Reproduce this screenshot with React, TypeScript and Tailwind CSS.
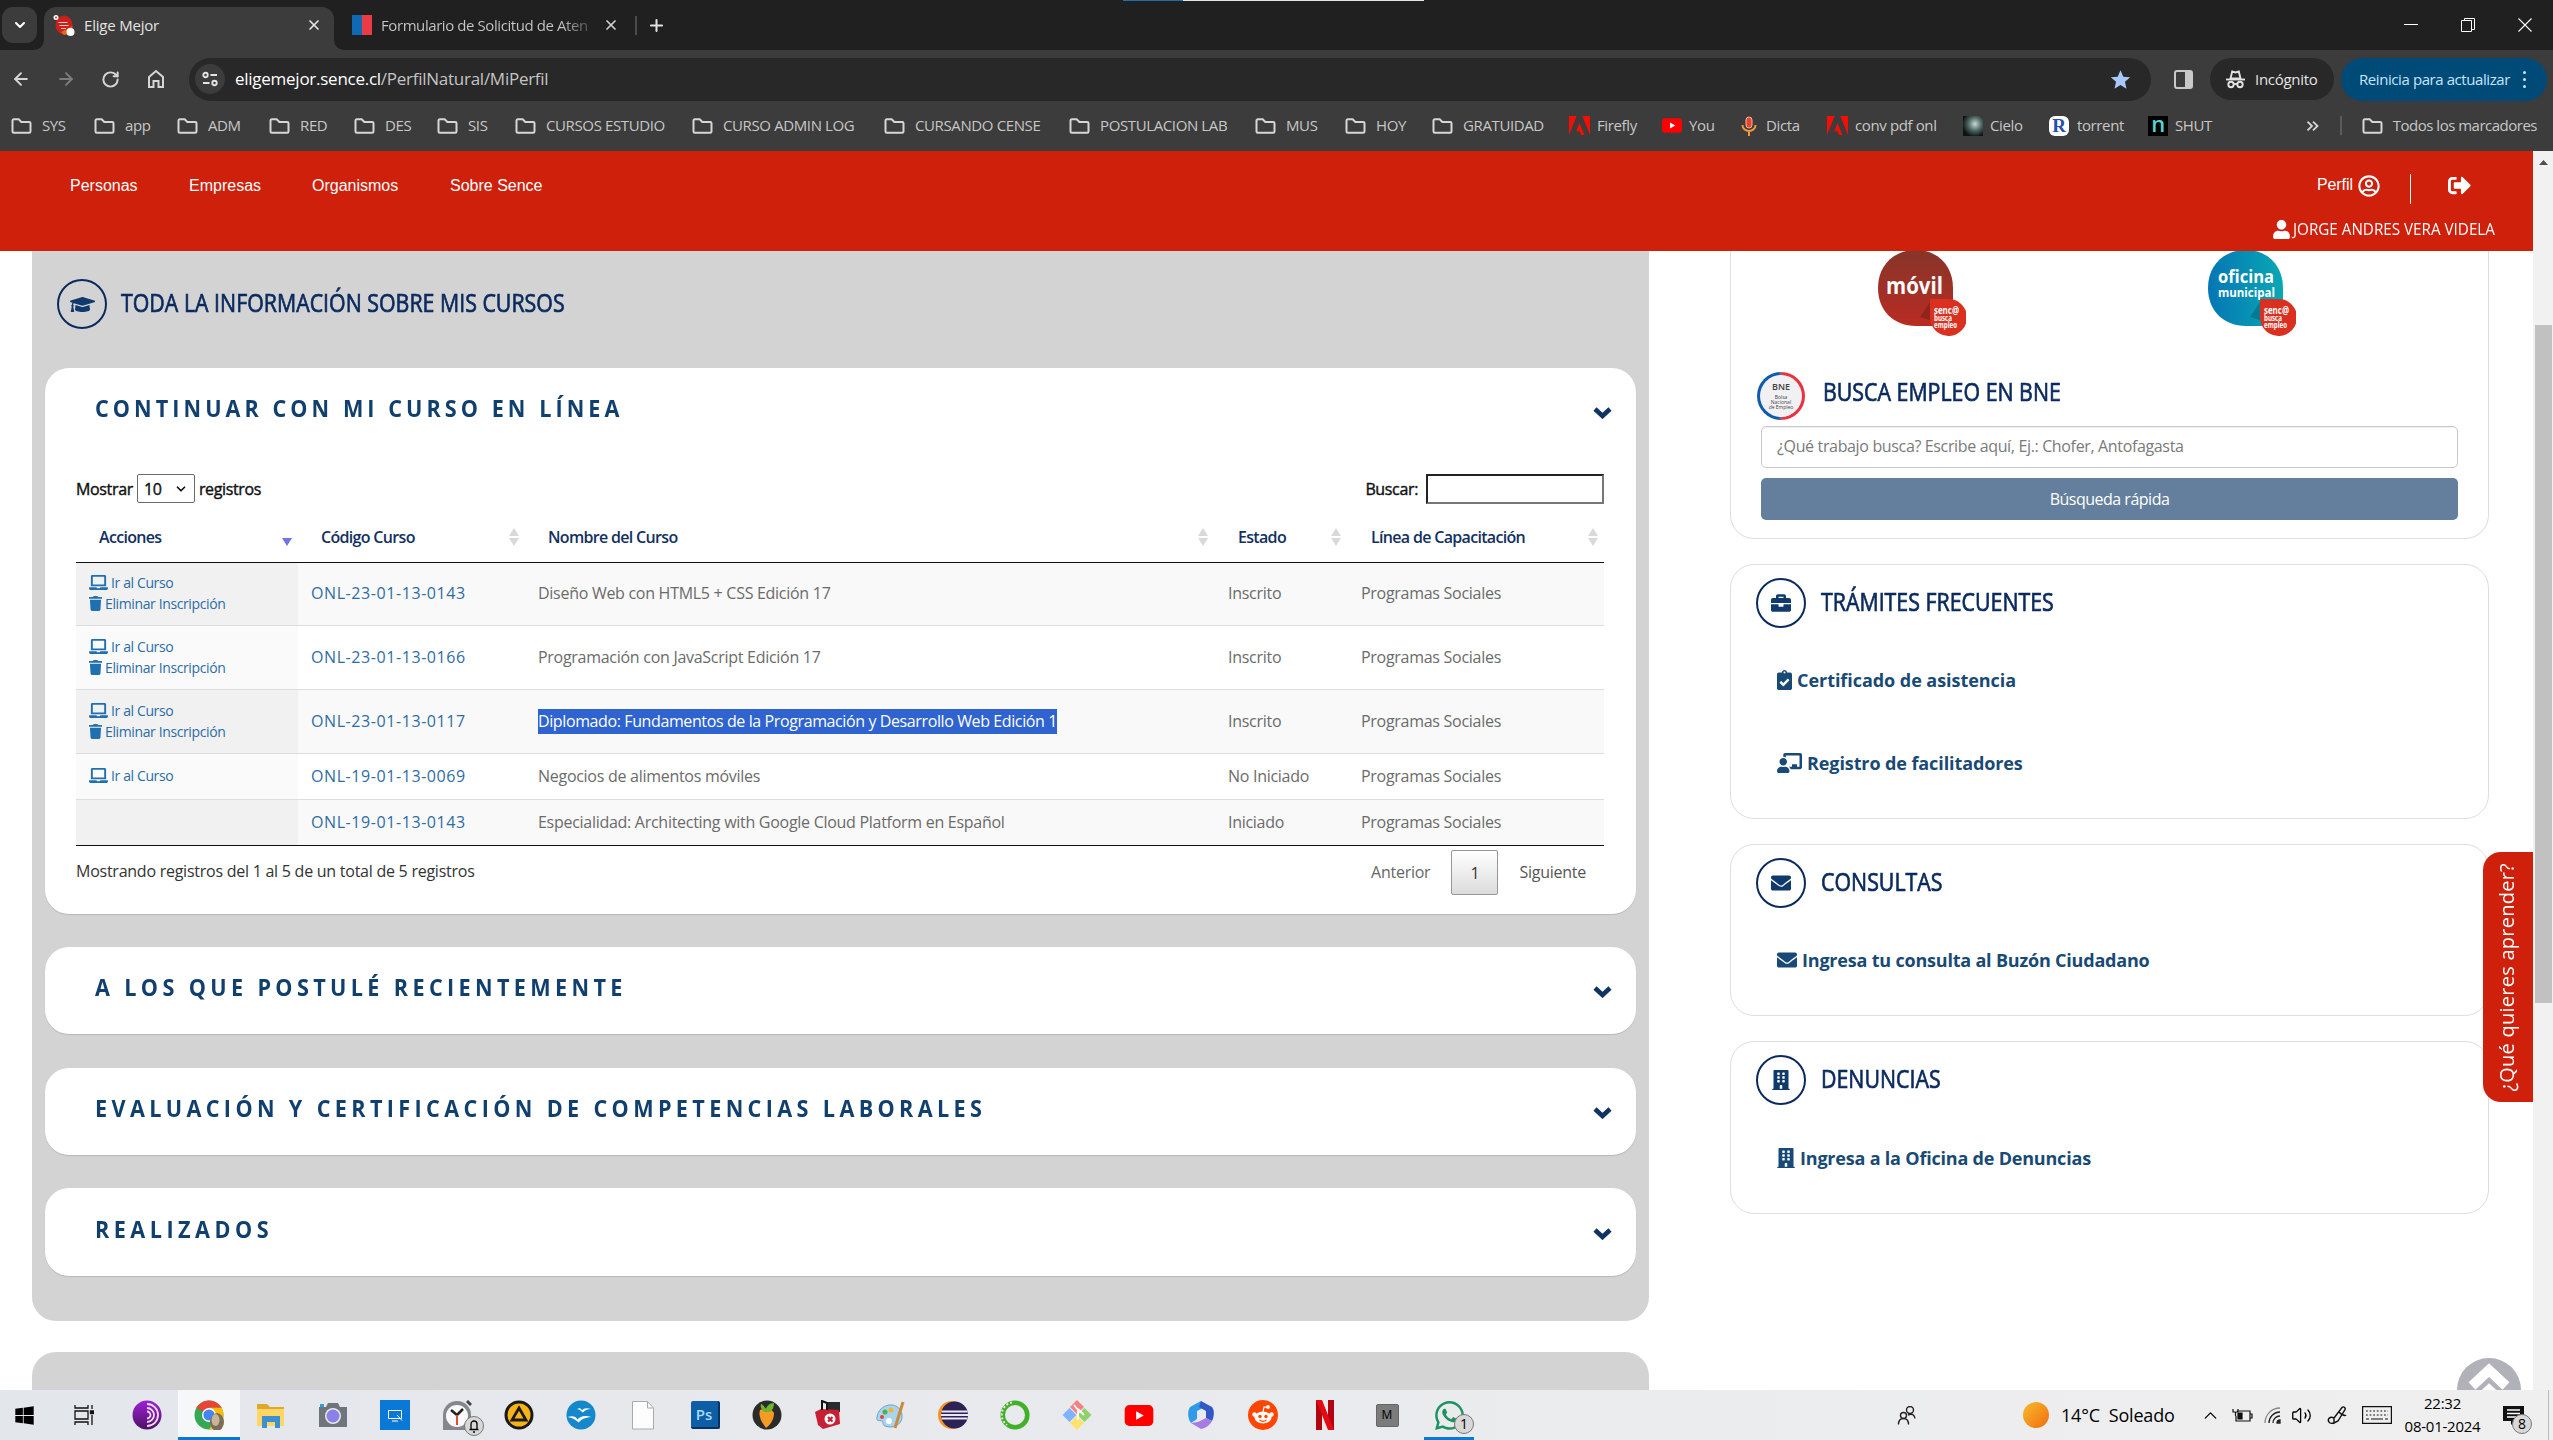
import type { ReactNode } from 'react'
import {
  FaBriefcase, FaBuilding, FaChalkboardTeacher, FaClipboardCheck, FaEnvelope, FaGraduationCap,
  FaLaptop, FaRegUserCircle, FaSignOutAlt, FaTrash, FaUser, FaWhatsapp, FaWindows,
} from 'react-icons/fa'
import { ArrowLeft, ArrowRight, ChevronDown, ChevronUp, Plus, RotateCw, Volume2, X } from 'lucide-react'

/* ---------- browser chrome ---------- */

const Folder = () => (
  <svg className="h-[16px] w-[21px] shrink-0" viewBox="0 0 21 16" fill="none" stroke="#d6d6d6" strokeWidth="2">
    <path d="M1.5 2.6a1.300 1.300 0 0 1 1.300-1.300h4.900l2.600 2.600h7.900a1.300 1.300 0 0 1 1.300 1.300v8.200a1.300 1.300 0 0 1-1.300 1.300H2.800a1.300 1.300 0 0 1-1.300-1.300z" />
  </svg>
)

const Adobe = () => (
  <svg className="h-[19px] w-[21px] shrink-0" viewBox="0 0 21 19" fill="#f40f02">
    <path d="M0 0h7.700L0 19zM13.300 0H21v19zM10.500 7l5 12h-3.300l-1.500-3.800H7.200z" />
  </svg>
)

const YouTube = ({ className }: { className: string }) => (
  <svg className={className} viewBox="0 0 30 22">
    <rect width="30" height="22" rx="5" fill="#f00" />
    <path d="M12 6.500v9l8-4.500z" fill="#fff" />
  </svg>
)

function Tabs() {
  return (
    <div className="flex h-[50px] items-start bg-[#202020]">
      <div className="mt-[7px] ml-[2px] flex h-[36px] w-[35px] items-center justify-center rounded-[11px] bg-[#3c3c3c]">
        <ChevronDown className="size-[16px] text-white" strokeWidth={3} />
      </div>
      <div className="ml-[-3px] h-[10px] w-[10px] self-end bg-[#3c3c3c]">
        <div className="h-full w-full rounded-br-[10px] bg-[#202020]" />
      </div>
      <div className="mt-[7px] flex h-[43px] w-[290px] items-center rounded-t-[12px] bg-[#3c3c3c] pb-[7px] pl-[9px]">
        <svg className="h-[21px] w-[22px]" viewBox="0 0 22 21">
          <ellipse cx="11" cy="10" rx="8.500" ry="9.500" fill="#c8201a" />
          <path d="M11 20c5 0 8.500-4 8.500-9L8 17z" fill="#f0641e" />
          <path d="M5.500 7.500h9M6.500 10.500h9M8 13.500h5" stroke="#f9c9c2" strokeWidth="1.200" />
          <circle cx="3" cy="2.500" r="2.500" fill="#fff" />
          <circle cx="3" cy="2.500" r="1" fill="#d42a1d" />
          <circle cx="17.500" cy="17" r="4" fill="#fff" />
        </svg>
        <span className="ml-[9px] text-[15px] tracking-[-0.2px] text-[#e3e3e3]">Elige Mejor</span>
        <X className="mr-[12px] ml-auto size-[16px] text-[#e3e3e3]" strokeWidth={2.600} />
      </div>
      <div className="h-[10px] w-[10px] self-end bg-[#3c3c3c]">
        <div className="h-full w-full rounded-bl-[10px] bg-[#202020]" />
      </div>
      <div className="mt-[7px] ml-[8px] flex h-[36px] items-center">
        <div className="flex h-[20px] w-[20px]">
          <div className="w-1/2 bg-[#0f69b4]" />
          <div className="w-1/2 bg-[#eb3c46]" />
        </div>
        <span className="ml-[9px] w-[212px] bg-linear-to-r from-[#c8c8c8] from-85% to-[#404040] bg-clip-text text-[15px] tracking-[-0.42px] whitespace-nowrap text-transparent">Formulario de Solicitud de Aten</span>
        <X className="ml-[10px] size-[16px] text-[#d0d0d0]" strokeWidth={2.600} />
        <div className="ml-[16px] h-[19px] w-[2px] bg-[#4a4a4a]" />
        <Plus className="ml-[10px] size-[19px] text-[#e3e3e3]" strokeWidth={2.600} />
      </div>
      <div className="ml-[457px] flex h-[2px]">
        <div className="h-[1px] w-[60px] bg-[#1f6fae]" />
        <div className="h-[1px] w-[241px] bg-[#dfe5e3]" />
      </div>
      <div className="mr-[21px] ml-auto flex h-[49px] items-center gap-[43px] text-white">
        <div className="h-px w-[14px] bg-white" />
        <svg className="size-[14px]" viewBox="0 0 14 14" fill="none" stroke="currentColor" strokeWidth="1">
          <path d="M.5 2.500h10v11H.500zM3.500 2.500v-2h10v11h-3" />
        </svg>
        <svg className="size-[14px]" viewBox="0 0 14 14" stroke="currentColor" strokeWidth="1.100">
          <path d="M.5.5l13 13M13.500.5l-13 13" />
        </svg>
      </div>
    </div>
  )
}

function Toolbar() {
  return (
    <div className="flex h-[58px] items-center pl-[11px] text-[#d6d6d6]">
      <ArrowLeft className="size-[20px]" strokeWidth={2.300} />
      <ArrowRight className="ml-[25px] size-[20px] text-[#7d7d7d]" strokeWidth={2.300} />
      <RotateCw className="ml-[25px] size-[19px]" strokeWidth={2.500} />
      <svg className="ml-[26px] size-[20px]" viewBox="0 0 20 20" fill="none" stroke="currentColor" strokeWidth="2">
        <path d="M3 8l7-6 7 6v10h-4.500v-6h-5v6H3z" />
      </svg>
      <div className="ml-[23px] flex h-[43px] w-[1962px] items-center rounded-[22px] bg-[#282828] pl-[6px]">
        <div className="flex size-[30px] items-center justify-center rounded-full bg-[#3c3c3c]">
          <svg className="size-[16px]" viewBox="0 0 16 16" fill="none" stroke="#e3e3e3" strokeWidth="1.900">
            <circle cx="3.500" cy="4" r="2.200" />
            <path d="M8.500 4H15M1 12h6.500" />
            <circle cx="12.500" cy="12" r="2.200" />
          </svg>
        </div>
        <span className="ml-[10px] text-[17px] tracking-[-0.26px] text-[#c4c4c4]">
          <span className="text-white">eligemejor.sence.cl</span>/PerfilNatural/MiPerfil
        </span>
        <svg className="mr-[20px] ml-auto size-[21px]" viewBox="0 0 24 24" fill="#a8c7fa">
          <path d="M12 1.500l3.200 7.300 7.900.7-6 5.200 1.800 7.800L12 18.400l-6.900 4.100 1.800-7.800-6-5.200 7.900-.7z" />
        </svg>
      </div>
      <div className="ml-[23px] flex h-[19px] w-[19px] justify-end rounded-[3px] border-2 border-[#c9c9c9]">
        <div className="w-[6px] bg-[#c9c9c9]" />
      </div>
      <div className="ml-[17px] flex h-[42px] w-[124px] items-center rounded-[21px] bg-[#282828] pl-[16px]">
        <svg className="h-[19px] w-[19px]" viewBox="0 0 19 19" fill="none" stroke="#e3e3e3" strokeWidth="1.900">
          <path d="M4.500 8.500l1.700-7 3.300 1 3.300-1 1.700 7z" />
          <path d="M0 9.500h19" />
          <circle cx="5" cy="14.500" r="2.700" />
          <circle cx="14" cy="14.500" r="2.700" />
          <path d="M7.500 14h4" />
        </svg>
        <span className="ml-[10px] text-[15px] tracking-[-0.3px] text-[#e3e3e3]">Incógnito</span>
      </div>
      <div className="ml-[7px] flex h-[43px] w-[206px] items-center rounded-[22px] bg-[#004a77] pl-[18px]">
        <span className="w-[152px] text-[15px] tracking-[-0.42px] whitespace-nowrap text-[#c2e7ff]">Reinicia para actualizar</span>
        <div className="ml-[12px] flex flex-col gap-[4px]">
          <div className="size-[3px] rounded-full bg-[#c2e7ff]" />
          <div className="size-[3px] rounded-full bg-[#c2e7ff]" />
          <div className="size-[3px] rounded-full bg-[#c2e7ff]" />
        </div>
      </div>
    </div>
  )
}

const Bookmark = ({ w, icon, gap = 'gap-[10px]', children }: { w: string; icon?: ReactNode; gap?: string; children: ReactNode }) => (
  <div className={`flex shrink-0 items-center whitespace-nowrap ${w} ${gap}`}>
    {icon ?? <Folder />}
    <span>{children}</span>
  </div>
)

function Bookmarks() {
  return (
    <div className="flex h-[43px] items-center pb-[8px] pl-[11px] text-[15px] tracking-[-0.38px] text-[#c7c7c7]">
      <Bookmark w="w-[83px]">SYS</Bookmark>
      <Bookmark w="w-[83px]">app</Bookmark>
      <Bookmark w="w-[92px]">ADM</Bookmark>
      <Bookmark w="w-[85px]">RED</Bookmark>
      <Bookmark w="w-[83px]">DES</Bookmark>
      <Bookmark w="w-[78px]">SIS</Bookmark>
      <Bookmark w="w-[177px]">CURSOS ESTUDIO</Bookmark>
      <Bookmark w="w-[192px]">CURSO ADMIN LOG</Bookmark>
      <Bookmark w="w-[185px]">CURSANDO CENSE</Bookmark>
      <Bookmark w="w-[186px]">POSTULACION LAB</Bookmark>
      <Bookmark w="w-[90px]">MUS</Bookmark>
      <Bookmark w="w-[87px]">HOY</Bookmark>
      <Bookmark w="w-[137px]">GRATUIDAD</Bookmark>
      <Bookmark w="w-[93px]" gap="gap-[7px]" icon={<Adobe />}>Firefly</Bookmark>
      <Bookmark w="w-[78px]" gap="gap-[7px]" icon={<YouTube className="h-[15px] w-[20px]" />}>You</Bookmark>
      <Bookmark w="w-[87px]" gap="gap-[8px]" icon={
        <svg className="h-[20px] w-[18px]" viewBox="0 0 18 20" fill="none">
          <rect x="6" y="1" width="6" height="11" rx="3" fill="#e8452c" stroke="#f6b8a0" />
          <path d="M2.500 9a6.500 6 0 0 0 13 0M9 15v5" stroke="#f29a38" strokeWidth="2" />
        </svg>}>Dicta</Bookmark>
      <Bookmark w="w-[136px]" gap="gap-[7px]" icon={<Adobe />}>conv pdf onl</Bookmark>
      <Bookmark w="w-[86px]" gap="gap-[7px]" icon={<div className="size-[20px] bg-[radial-gradient(ellipse_at_60%_40%,#c9d8d2,#4d6663_40%,#0c1413_75%)]" />}>Cielo</Bookmark>
      <Bookmark w="w-[99px]" gap="gap-[8px]" icon={<div className="flex size-[20px] items-center justify-center rounded-[6px] bg-white font-['Liberation_Serif'] text-[19px] leading-none font-bold text-[#2350a8]">R</div>}>torrent</Bookmark>
      <Bookmark w="w-[66px]" gap="gap-[7px]" icon={<div className="flex h-[20px] w-[20px] items-center justify-center bg-black pb-[5px] text-[22px] leading-none font-semibold text-[#55d6d0]">n</div>}>SHUT</Bookmark>
      <svg className="mr-[21px] ml-auto h-[10px] w-[13px]" viewBox="0 0 13 10" fill="none" stroke="#d6d6d6" strokeWidth="1.800">
        <path d="M1.500.7L6 5 1.500 9.300M7 .7L11.500 5 7 9.300" />
      </svg>
      <div className="h-[19px] w-[2px] bg-[#5b5b5b]" />
      <div className="mr-[16px] ml-[20px] flex items-center gap-[10px] tracking-[-0.5px]">
        <Folder />
        <span>Todos los marcadores</span>
      </div>
    </div>
  )
}

/* ---------- page ---------- */

function SiteHeader() {
  return (
    <header className="flex h-[100px] bg-[#ce200b] font-['Liberation_Sans'] text-[16px] leading-[20px] text-white">
      <nav className="flex pt-[25px] pl-[70px]">
        <span className="w-[119px]">Personas</span>
        <span className="w-[123px]">Empresas</span>
        <span className="w-[138px]">Organismos</span>
        <span>Sobre Sence</span>
      </nav>
      <div className="mt-[23px] ml-auto w-[260px]">
        <div className="flex h-[30px] items-center pl-[44px]">
          <span className="mb-[8px] w-[41px] tracking-[-0.1px]">Perfil</span>
          <FaRegUserCircle className="mb-[6px] size-[22px]" />
          <div className="ml-[30px] h-[30px] w-px bg-white" />
          <FaSignOutAlt className="mb-[7px] ml-[37px] size-[23px]" />
        </div>
        <div className="mt-[15px] flex h-[20px] items-center gap-[3px] font-['Open_Sans'] text-[17px]">
          <FaUser className="h-[19px] w-[17px]" />
          <span className="origin-left scale-x-[0.895] whitespace-nowrap">JORGE ANDRES VERA VIDELA</span>
        </div>
      </div>
    </header>
  )
}

const Round = ({ children }: { children: ReactNode }) => (
  <div className="flex size-[50px] shrink-0 items-center justify-center rounded-full border-2 border-[#0a2a5e] text-[#0f3a6b]">{children}</div>
)

const SectionTitle = ({ children }: { children: ReactNode }) => (
  <h2 className="mt-[-2px] origin-left scale-x-[0.854] text-[25px] font-medium whitespace-nowrap text-[#0a2a5e] [-webkit-text-stroke:0.7px_#0a2a5e]">{children}</h2>
)

const CardHead = ({ children, tracking = 'tracking-[4.86px]' }: { children: ReactNode; tracking?: string }) => (
  <div className="flex h-[80px] items-center justify-between pr-[24px] pl-[50px]">
    <h3 className={`origin-left scale-x-[0.9] text-[24px] font-bold whitespace-nowrap text-[#11406e] ${tracking}`}>{children}</h3>
    <svg className="mt-[10px] h-[12px] w-[19px] shrink-0" viewBox="0 0 19 12" fill="none" stroke="#0f3363" strokeWidth="4.600">
      <path d="M2 2l7.500 7L17 2" />
    </svg>
  </div>
)

const Sort = ({ active = false }: { active?: boolean }) => (
  <svg className="h-[18px] w-[10px]" viewBox="0 0 10 18">
    {!active && <path d="M5 0l5 8H0z" fill="#d9d9d9" />}
    <path d="M5 18l5-8H0z" fill={active ? '#7076de' : '#d9d9d9'} />
  </svg>
)

const Th = ({ children, active, pr = 'pr-[6px]' }: { children: ReactNode; active?: boolean; pr?: string }) => (
  <div className={`flex items-center justify-between pt-[8px] pl-[23px] ${pr}`}>
    <span className="whitespace-nowrap">{children}</span>
    <Sort active={active} />
  </div>
)

const rows = [
  { h: 'h-[62px]', code: 'ONL-23-01-13-0143', name: 'Diseño Web con HTML5 + CSS Edición 17', state: 'Inscrito', go: true, del: true },
  { h: 'h-[64px]', code: 'ONL-23-01-13-0166', name: 'Programación con JavaScript Edición 17', state: 'Inscrito', go: true, del: true },
  { h: 'h-[64px]', code: 'ONL-23-01-13-0117', name: 'Diplomado: Fundamentos de la Programación y Desarrollo Web Edición 1', state: 'Inscrito', go: true, del: true, selected: true },
  { h: 'h-[46px]', code: 'ONL-19-01-13-0069', name: 'Negocios de alimentos móviles', state: 'No Iniciado', go: true, del: false },
  { h: 'h-[46px]', code: 'ONL-19-01-13-0143', name: 'Especialidad: Architecting with Google Cloud Platform en Español', state: 'Iniciado', go: false, del: false },
]

function CourseTable() {
  return (
    <div>
      <div className="grid h-[59px] grid-cols-[222px_227px_690px_133px_256px] text-[16px] font-semibold tracking-[-0.68px] text-[#12305f]">
        <Th active>Acciones</Th>
        <Th>Código Curso</Th>
        <Th pr="pr-[7px]">Nombre del Curso</Th>
        <Th pr="pr-[7px]">Estado</Th>
        <Th>Línea de Capacitación</Th>
      </div>
      <div className="border-y border-[#111]">
        {rows.map((r, i) => (
          <div key={r.code} className={`grid grid-cols-[222px_227px_690px_133px_256px] items-stretch text-[16px] tracking-[-0.28px] text-[#6b6b6b] ${r.h} ${i > 0 ? 'border-t border-[#ddd]' : ''} ${i % 2 === 0 ? 'bg-[#f9f9f9]' : 'bg-white'}`}>
            <div className={`flex flex-col justify-center pb-[2px] pl-[13px] text-[14px] leading-[21px] tracking-[-0.38px] text-[#2a6da8] ${i % 2 === 0 ? 'bg-[#f1f1f1]' : 'bg-[#fafafa]'}`}>
              {r.go && <div className="flex items-center gap-[3px]"><FaLaptop className="size-[19px] text-[#1f70b0]" />Ir al Curso</div>}
              {r.del && <div className="flex items-center gap-[3px]"><FaTrash className="h-[15px] w-[13px] text-[#1f70b0]" />Eliminar Inscripción</div>}
            </div>
            <div className="flex items-center pb-[2px] pl-[13px] tracking-[0.58px] text-[#2e6da4]">{r.code}</div>
            <div className="flex items-center pb-[2px] pl-[13px] whitespace-nowrap">
              <span className={r.selected ? 'mt-[2px] bg-[#2f63d0] leading-[25px] tracking-[-0.39px] text-white' : ''}>{r.name}</span>
            </div>
            <div className="flex items-center pb-[2px] pl-[13px]">{r.state}</div>
            <div className="flex items-center pb-[2px] pl-[13px]">Programas Sociales</div>
          </div>
        ))}
      </div>
    </div>
  )
}

function Courses() {
  return (
    <main className="ml-[32px] w-[1617px] shrink-0">
      <section className="h-[1070px] rounded-b-[24px] bg-[#d3d3d3] pt-[28px] pr-[13px] pl-[13px]">
        <div className="flex items-center gap-[14px] pl-[12px]">
          <Round><FaGraduationCap className="size-[25px]" /></Round>
          <SectionTitle>TODA LA INFORMACIÓN SOBRE MIS CURSOS</SectionTitle>
        </div>
        <div className="mt-[39px] h-[546px] rounded-[24px] bg-white shadow-[0_1px_1px_#0002]">
          <CardHead tracking="tracking-[4.52px]">CONTINUAR CON MI CURSO EN LÍNEA</CardHead>
          <div className="pt-[26px] pr-[32px] pl-[31px]">
            <div className="flex h-[29px] items-center text-[16px] tracking-[-0.35px] text-[#111] [-webkit-text-stroke:0.4px_#111]">
              <span>Mostrar</span>
              <div className="mx-[4px] flex h-[29px] w-[58px] items-center justify-between rounded-[2px] border border-[#6b6b6b] px-[6px]">
                <span>10</span>
                <ChevronDown className="size-[14px]" strokeWidth={3} />
              </div>
              <span>registros</span>
              <span className="mr-[8px] ml-auto">Buscar:</span>
              <div className="h-[30px] w-[178px] border-2 border-t-[#222] border-r-[#767676] border-b-[#767676] border-l-[#222]" />
            </div>
            <CourseTable />
            <div className="mt-[4px] flex h-[45px] items-center text-[16px] tracking-[-0.25px] text-[#333]">
              <span className="pb-[3px]">Mostrando registros del 1 al 5 de un total de 5 registros</span>
              <span className="ml-auto pb-[2px] text-[#666]">Anterior</span>
              <div className="mx-[21px] flex h-[45px] w-[47px] items-center justify-center rounded-[2px] border border-[#979797] bg-linear-to-b from-white to-[#dcdcdc]">1</div>
              <span className="mr-[18px] pb-[2px] text-[#555]">Siguiente</span>
            </div>
          </div>
        </div>
        <div className="mt-[33px] h-[87px] rounded-[24px] bg-white shadow-[0_1px_1px_#0002]"><CardHead>A LOS QUE POSTULÉ RECIENTEMENTE</CardHead></div>
        <div className="mt-[34px] h-[87px] rounded-[24px] bg-white shadow-[0_1px_1px_#0002]"><CardHead>EVALUACIÓN Y CERTIFICACIÓN DE COMPETENCIAS LABORALES</CardHead></div>
        <div className="mt-[33px] h-[88px] rounded-[24px] bg-white pt-px shadow-[0_1px_1px_#0002]"><CardHead tracking="tracking-[5px]">REALIZADOS</CardHead></div>
      </section>
      <section className="mt-[31px] h-[60px] rounded-t-[24px] bg-[#d3d3d3]" />
    </main>
  )
}

const OfficeLogo = ({ id, from, to, top, bottom }: { id: string; from: string; to: string; top: string; bottom?: string }) => (
  <svg className="h-[88px] w-[88px]" viewBox="0 0 88 88" fontFamily="Open Sans" fontWeight="700" fill="#fff">
    <defs>
      <linearGradient id={id} x1="0" y1="0" x2={bottom ? '1' : '0'} y2={bottom ? '0' : '1'}>
        <stop offset="0" stopColor={from} />
        <stop offset="1" stopColor={to} />
      </linearGradient>
    </defs>
    <path d="M38-1C60-1 75 15 75 37v14L54 75H38C16 75 0 60 0 37S16-1 38-1z" fill={`url(#${id})`} />
    <path d="M42 66l12-18v22z" fill="#000" opacity=".18" />
    <path d="M52 48h17a18.500 18.500 0 1 1-17 19z" fill="#d9301f" />
    {bottom ? (
      <>
        <text x="10" y="32" fontSize="18" textLength="56" lengthAdjust="spacingAndGlyphs">{top}</text>
        <text x="10" y="45.500" fontSize="13" textLength="57" lengthAdjust="spacingAndGlyphs">{bottom}</text>
      </>
    ) : (
      <text x="8" y="43" fontSize="23" textLength="57" lengthAdjust="spacingAndGlyphs">{top}</text>
    )}
    <g fontSize="10">
      <text x="56" y="63" textLength="25" lengthAdjust="spacingAndGlyphs">senc@</text>
      <text x="56" y="70" fontSize="8" textLength="18" lengthAdjust="spacingAndGlyphs">busca</text>
      <text x="56" y="77" fontSize="8" textLength="23" lengthAdjust="spacingAndGlyphs">empleo</text>
    </g>
  </svg>
)

const SideCard = ({ h, icon, title, children }: { h: string; icon: ReactNode; title: string; children: ReactNode }) => (
  <section className={`rounded-[24px] border border-[#dedede] pt-[13px] pl-[25px] ${h}`}>
    <div className="flex items-center gap-[15px]">
      <Round>{icon}</Round>
      <SectionTitle>{title}</SectionTitle>
    </div>
    <div className="mt-[40px] flex flex-col gap-[59px] pl-[21px] text-[18px] leading-[24px] font-bold tracking-[-0.16px] text-[#184a75]">{children}</div>
  </section>
)

function Sidebar() {
  return (
    <aside className="ml-[81px] flex w-[759px] flex-col">
      <section className="h-[288px] rounded-b-[24px] border border-t-0 border-[#dedede] pl-[25px]">
        <div className="flex h-[121px] gap-[242px] pl-[122px]">
          <OfficeLogo id="movil" from="#86352a" to="#b92b22" top="móvil" />
          <OfficeLogo id="oficina" from="#0576b4" to="#08a8b4" top="oficina" bottom="municipal" />
        </div>
        <div className="flex gap-[18px] pl-px">
          <div className="rounded-full bg-linear-to-r from-[#0f5cae] from-45% to-[#e8323e] to-55% p-[3px]">
            <div className="flex size-[42px] flex-col items-center justify-center rounded-full bg-[#f1f1f3] text-[9px] leading-[10px] font-semibold text-[#444]">
              BNE
              <span className="mt-[3px] text-center text-[5px] leading-[5px] font-normal">Bolsa<br />Nacional<br />de Empleo</span>
            </div>
          </div>
          <div className="flex h-[42px] items-center"><SectionTitle>BUSCA EMPLEO EN BNE</SectionTitle></div>
        </div>
        <div className="mt-[6px] ml-[5px] flex h-[42px] w-[697px] items-center rounded-[5px] border border-[#c8c8c8] pb-[2px] pl-[15px] text-[16px] tracking-[-0.35px] text-[#7a7a7a] shadow-[inset_0_1px_1px_#0001]">¿Qué trabajo busca? Escribe aquí, Ej.: Chofer, Antofagasta</div>
        <div className="mt-[10px] ml-[5px] flex h-[42px] w-[697px] items-center justify-center rounded-[5px] bg-[#647f9d] text-[16px] tracking-[-0.5px] text-white">Búsqueda rápida</div>
      </section>
      <div className="h-[25px]" />
      <SideCard h="h-[255px]" icon={<FaBriefcase className="size-[20px]" />} title="TRÁMITES FRECUENTES">
        <div className="flex items-center gap-[5px] tracking-[-0.05px]"><FaClipboardCheck className="h-[20px] w-[15px]" />Certificado de asistencia</div>
        <div className="flex items-center gap-[5px] tracking-[-0.1px]"><FaChalkboardTeacher className="h-[20px] w-[25px]" />Registro de facilitadores</div>
      </SideCard>
      <div className="h-[25px]" />
      <SideCard h="h-[172px]" icon={<FaEnvelope className="size-[20px]" />} title="CONSULTAS">
        <div className="flex items-center gap-[5px] tracking-[-0.2px]"><FaEnvelope className="size-[20px]" />Ingresa tu consulta al Buzón Ciudadano</div>
      </SideCard>
      <div className="h-[25px]" />
      <SideCard h="h-[173px]" icon={<FaBuilding className="size-[20px]" />} title="DENUNCIAS">
        <div className="flex items-center gap-[5px] pt-[1px] tracking-[-0.2px]"><FaBuilding className="h-[20px] w-[18px]" />Ingresa a la Oficina de Denuncias</div>
      </SideCard>
    </aside>
  )
}

/* ---------- taskbar ---------- */

const Svg = ({ children }: { children: ReactNode }) => (
  <svg className="size-[30px]" viewBox="0 0 30 30" fill="none">{children}</svg>
)

const Badge = ({ children, className }: { children: ReactNode; className: string }) => (
  <div className={`absolute flex size-[20px] items-center justify-center rounded-full border border-[#777] bg-[#d8d8d8] text-[14px] leading-none text-black ${className}`}>{children}</div>
)

const apps: { key: string; cell?: string; icon: ReactNode; extra?: ReactNode }[] = [
  { key: 'tor', icon: <Svg><defs><linearGradient id="tor" x1="0" y1="0" x2="0" y2="1"><stop stopColor="#a020d8" /><stop offset="1" stopColor="#4b1263" /></linearGradient></defs><circle cx="15" cy="15" r="14.500" fill="url(#tor)" /><path d="M15 4a11 11 0 0 1 0 22M15 8a7 7 0 0 1 0 14M15 11.500a3.500 3.500 0 0 1 0 7" stroke="#f3d9ff" strokeWidth="1.800" /></Svg> },
  { key: 'chrome', cell: 'bg-[#f6f7f9] border-b-[3px] border-[#0a78d4] pt-[3px]', icon: <Svg><circle cx="15" cy="15" r="14.500" fill="#34a853" /><path d="M15 15L2.500 7.800A14.500 14.500 0 0 1 27.600 7.800H15z" fill="#ea4335" /><path d="M15 7.800h12.600A14.500 14.500 0 0 1 15 29.500l6.200-11z" fill="#fbbc05" /><circle cx="15" cy="15" r="7" fill="#fff" /><circle cx="15" cy="15" r="5.600" fill="#4285f4" /><ellipse cx="23" cy="22" rx="7" ry="9" fill="#7d6c56" /><ellipse cx="21.500" cy="20" rx="4" ry="6" fill="#c9b59c" /></Svg> },
  { key: 'files', icon: <Svg><path d="M1 4h10l3 3h14v19H1z" fill="#e0a72c" /><path d="M1 9h27v17H1z" fill="#fdd663" /><path d="M6 28V16h18v12h-5v-6h-8v6z" fill="#3c8fd2" /></Svg> },
  { key: 'camera', icon: <Svg><path d="M1 7h7l2-4h10l2 4h7v20H1z" fill="#6e767c" /><circle cx="15" cy="16" r="8" fill="#e6e9ec" /><circle cx="15" cy="16" r="6.500" fill="#8b7fe8" /><path d="M2 4h4v3H2z" fill="#2aa0dd" /></Svg> },
  { key: 'remote', icon: <Svg><path d="M0 0h30v30H0z" fill="#0a78d7" /><path d="M8.500 10.500h13v8h-13zM12 21h6M17 15l5 5.500" stroke="#fff" strokeWidth="1" /></Svg> },
  { key: 'alarm', icon: <Svg><path d="M1 30V15a14 14 0 0 1 28 0v15z" fill="#84888c" /><path d="M25 1l4 4" stroke="#444" strokeWidth="3" /><circle cx="15" cy="16" r="11" fill="#fafafa" /><path d="M9 10l6 5 6-6" stroke="#222" strokeWidth="2.500" /><path d="M15 15v10" stroke="#e0502c" strokeWidth="2" /></Svg>, extra: <Badge className="right-[4px] bottom-[4px]"><svg className="size-[14px]" viewBox="0 0 14 14" fill="none" stroke="#000" strokeWidth="1.300"><path d="M4 10V5a3 3 0 0 1 6 0v5M2.500 10.500h9M6 13h2" /></svg></Badge> },
  { key: 'aimp', icon: <Svg><circle cx="15" cy="15" r="14.500" fill="#1a1a1a" /><circle cx="15" cy="15" r="11.500" fill="#f8b414" /><path d="M15 8L22 20H8z" stroke="#1a1a1a" strokeWidth="2.800" /></Svg> },
  { key: 'office', icon: <Svg><circle cx="15" cy="15" r="14.500" fill="#1587cb" /><path d="M11 9c3-1.500 4-.5 5 1.500 1.500-2 4-3 9-1.500-4 0-6 1.500-8 3.500-2-1.500-3-3-6-3.500zM1.500 17c5-1.500 8-1 10 2.500 3-3.500 7-4.500 14-2.500-7 .5-10 2.500-13 5.500-3-2.500-5-4.500-11-5.500z" fill="#fff" /></Svg> },
  { key: 'doc', icon: <Svg><path d="M4.500 1.500h15l6 6.500v21h-21z" fill="#fdfdfd" stroke="#aaa" /><path d="M19.500 1.500V8h6" stroke="#aaa" /></Svg> },
  { key: 'ps', icon: <div className="flex h-[28px] w-[29px] items-center justify-center rounded-[2px] border-r-2 border-b-2 border-[#06325c] bg-[#0d5ea6] text-[15px] leading-none font-semibold text-[#a9dcff]">Ps</div> },
  { key: 'fl', icon: <Svg><circle cx="15" cy="15" r="14.500" fill="#2b2b2b" /><path d="M8 10c5-3 12-1 14 3 0 7-4 12-8 15-4-5-8-12-6-18z" fill="#f59a22" /><path d="M14 12c-1-5 3-9 8-9 0 4-1 7-4 9zM12 12C9 9 8 6 9 4c3 1 5 4 5 8z" fill="#6eb52d" /></Svg> },
  { key: 'media', icon: <Svg><path d="M14 2h12v10l-12 2z" fill="#2a2a2a" /><path d="M1 12l6-3 18 1 1 14-17 5-5-4z" fill="#c91f35" /><circle cx="16" cy="19" r="5.500" fill="#fff" /><path d="M14 17l4.500 4.500M18.500 17L14 21.500" stroke="#c91f35" strokeWidth="2.200" /><path d="M8 10V1l5 2v7" stroke="#111" strokeWidth="2" /></Svg> },
  { key: 'paint', icon: <Svg><path d="M13 5c8-1 14 5 13 13-1 7-9 11-17 8-3-1-1-4-3-5-3-1-6 1-5-4C2 10 7 6 13 5z" fill="#a9d4ee" stroke="#6ba3c8" /><circle cx="9" cy="12" r="2.500" fill="#4caf50" /><circle cx="15" cy="10" r="2.500" fill="#f2b632" /><circle cx="6" cy="17" r="2" fill="#e4453a" /><circle cx="13" cy="21" r="3" fill="#fff" /><path d="M27 2l-8 26" stroke="#cc8a3c" strokeWidth="3" /></Svg> },
  { key: 'eclipse', icon: <Svg><circle cx="14" cy="15" r="14" fill="#f7941e" /><circle cx="16.500" cy="15" r="13.500" fill="#2c2255" /><path d="M3.500 11.500h26M3 15h27M3.500 18.500h26" stroke="#e9e7f1" strokeWidth="2" /></Svg> },
  { key: 'anaconda', icon: <Svg><circle cx="15" cy="15" r="12.300" stroke="#43b02a" strokeWidth="4.600" /><path d="M12 2.500A12.500 12.500 0 0 0 7 25" stroke="#e8e8e8" strokeWidth="2" strokeDasharray="2 2" /></Svg> },
  { key: 'git', icon: <Svg><path d="M15 0l7 7-7 7-7-7z" fill="#f98080" /><path d="M7.500 8l7 7-7 7-7-7z" fill="#80b3ff" /><path d="M22.500 8l7 7-7 7-7-7z" fill="#8fd16a" /><path d="M15 16l7 7-7 7-7-7z" fill="#fee26b" /><path d="M12 5l4 5v10M16 9l6 6" stroke="#fff" strokeWidth="1.800" /></Svg> },
  { key: 'youtube', icon: <YouTube className="h-[21px] w-[30px]" /> },
  { key: 'm365', icon: <Svg><path d="M15 1L4 7c-3 5-2 12 1 16l6-4v-8l8-4z" fill="#2f9be8" /><path d="M15 1l11 6c3 4 2 10 0 14l-6-3v-7l-7-4z" fill="#3457c8" /><path d="M5 23l10 6c5-1 9-4 11-8l-6-3-8 4z" fill="#a77be6" /></Svg> },
  { key: 'reddit', icon: <Svg><circle cx="15" cy="15" r="15" fill="#ff4500" /><ellipse cx="15" cy="17.500" rx="8.500" ry="6" fill="#fff" /><circle cx="6.500" cy="14.500" r="2.200" fill="#fff" /><circle cx="23.500" cy="14.500" r="2.200" fill="#fff" /><circle cx="20" cy="7" r="1.900" fill="#fff" /><path d="M15 12l1-5 4 .5" stroke="#fff" strokeWidth="1.200" /><circle cx="12" cy="16.500" r="1.700" fill="#ff4500" /><circle cx="18" cy="16.500" r="1.700" fill="#ff4500" /><path d="M11.500 20c2 1.500 5 1.500 7 0" stroke="#ff4500" strokeWidth="1.100" /></Svg> },
  { key: 'netflix', icon: <Svg><path d="M6 0h6v30H6zM18 0h6v30h-6z" fill="#b1060f" /><path d="M6 0h6l12 30h-6z" fill="#e50914" /></Svg> },
  { key: 'm', icon: <div className="flex size-[23px] items-center justify-center rounded-[2px] border border-[#666] bg-[#7b7b7b] text-[12px] leading-none text-black">M</div> },
  { key: 'whatsapp', cell: 'border-b-[3px] border-[#0a78d4] pt-[3px] mx-[6px]', icon: <FaWhatsapp className="size-[33px] text-[#1c9360]" />, extra: <Badge className="right-[0px] bottom-[3px]">1</Badge> },
]

function Taskbar() {
  return (
    <footer className="flex h-[50px] shrink-0 bg-linear-to-r from-[#e3e6eb] to-[#efefef]">
      <div className="flex w-[48px] items-center justify-center"><FaWindows className="size-[21px] text-black" /></div>
      <div className="flex w-[68px] items-center justify-center pl-[3px]">
        <svg className="size-[20px]" viewBox="0 0 20 20" fill="none" stroke="#111" strokeWidth="1.300">
          <path d="M1 0v3h13V0M1 20v-3h13v3M1 6h13v8H1zM18 0v4M18 10v10" /><path d="M16.500 6h3v2.500h-3z" fill="#111" />
        </svg>
      </div>
      {apps.map((a) => (
        <div key={a.key} className="flex w-[62px] shrink-0">
          <div className={`relative flex grow items-center justify-center ${a.cell ?? ''}`}>{a.icon}{a.extra}</div>
        </div>
      ))}
      <div className="mr-[4px] ml-auto flex shrink-0 items-center border-r border-[#bbb] whitespace-nowrap text-black">
        <svg className="mr-[107px] size-[19px]" viewBox="0 0 19 19" fill="none" stroke="#222" strokeWidth="1.400">
          <circle cx="13" cy="4" r="3.500" /><circle cx="6.500" cy="9.500" r="3" /><path d="M1.500 18.500c0-4 2-6 5-6s5 2 5 6M11 9c4-2 6.500 0 7 3.500" />
        </svg>
        <div className="size-[26px] rounded-full bg-linear-to-br from-[#f5bb2d] to-[#f06a0c]" />
        <span className="ml-[12px] w-[112px] text-[18px] tracking-[-0.2px] whitespace-pre">14°C  Soleado</span>
        <ChevronUp className="ml-[27px] size-[21px]" strokeWidth={1.500} />
        <svg className="ml-[11px] h-[14px] w-[21px]" viewBox="0 0 21 14" fill="none" stroke="#111" strokeWidth="1.200">
          <path d="M5 3h13v10H4V8M18 6h2v4h-2M1 1v3h5V1M3.500 4v4" /><path d="M6 5h4v6H6z" fill="#111" />
        </svg>
        <svg className="ml-[11px] h-[17px] w-[17px]" viewBox="0 0 17 17" fill="none" stroke="#222" strokeWidth="1.300">
          <path d="M1 16A15 15 0 0 1 16 1" stroke="#888" /><path d="M5 16A11 11 0 0 1 16 5M9 16a7 7 0 0 1 7-7" /><path d="M13 16a3 3 0 0 1 3-3v3z" fill="#222" />
        </svg>
        <Volume2 className="ml-[10px] size-[21px]" strokeWidth={1.500} />
        <svg className="ml-[15px] size-[20px]" viewBox="0 0 20 20" fill="none" stroke="#111" strokeWidth="1.400">
          <path d="M7 13L15 2.500c1.500-1.500 4 .3 3 2.200L11 16l-4 2zM12 7c3 3 6 4 7 3M7 13c-4-2-7 1-5 4 1 2 3 1.500 5 1" />
        </svg>
        <svg className="ml-[15px] h-[18px] w-[30px]" viewBox="0 0 30 18" fill="none" stroke="#111" strokeWidth="1.200">
          <path d="M.6.6h28.800v16.800H.600z" /><path d="M4 5h22M4 9h22" strokeDasharray="1.800 1.800" /><path d="M4 13h3M9 13h12M23 13h3" />
        </svg>
        <div className="ml-[12px] flex w-[77px] flex-col items-center text-[15px] leading-[23px] tracking-[-0.25px]">
          <span>22:32</span>
          <span>08-01-2024</span>
        </div>
        <div className="relative mr-[24px] ml-[22px]">
          <svg className="h-[19px] w-[21px]" viewBox="0 0 21 19"><path d="M0 0h21v15h-9l-4 4v-4H0z" fill="#111" /><path d="M4 4h13M4 7.500h13M4 11h9" stroke="#fff" strokeWidth="1.300" /></svg>
          <Badge className="top-[8px] left-[9px]">8</Badge>
        </div>
      </div>
    </footer>
  )
}

export default function App() {
  return (
    <div className="flex h-[1440px] w-[2553px] flex-col overflow-hidden bg-white font-['Open_Sans',sans-serif]">
      <div className="h-[151px] shrink-0 bg-[#3c3c3c]">
        <Tabs />
        <Toolbar />
        <Bookmarks />
      </div>
      <div className="flex h-[1239px] shrink-0 overflow-hidden">
        <div className="relative h-[1239px] w-[2533px] overflow-hidden">
          <SiteHeader />
          <div className="flex">
            <Courses />
            <Sidebar />
          </div>
          <div className="absolute top-[701px] right-0 flex h-[250px] w-[50px] items-center justify-center rounded-l-[18px] bg-[#ce200b] text-[20px] tracking-[0.25px] text-white">
            <span className="rotate-180 pl-[2px] whitespace-nowrap [writing-mode:vertical-rl]">¿Qué quieres aprender?</span>
          </div>
          <div className="absolute top-[1207px] right-[12px] flex size-[64px] justify-center rounded-full bg-[#b0b1b9] pt-[4px]">
            <svg className="h-[50px] w-[42px]" viewBox="0 0 42 50" fill="none" stroke="#fff" strokeWidth="10">
              <path d="M4 24L21 8l17 16M4 44l17-16 17 16" />
            </svg>
          </div>
        </div>
        <div className="flex w-[20px] flex-col items-center bg-[#f1f1f1]">
          <svg className="mt-[9px] h-[5px] w-[9px]" viewBox="0 0 9 5"><path d="M4.500 0L9 5H0z" fill="#505050" /></svg>
          <div className="mt-[160px] h-[678px] w-[17px] bg-[#c1c1c1]" />
        </div>
      </div>
      <Taskbar />
    </div>
  )
}
